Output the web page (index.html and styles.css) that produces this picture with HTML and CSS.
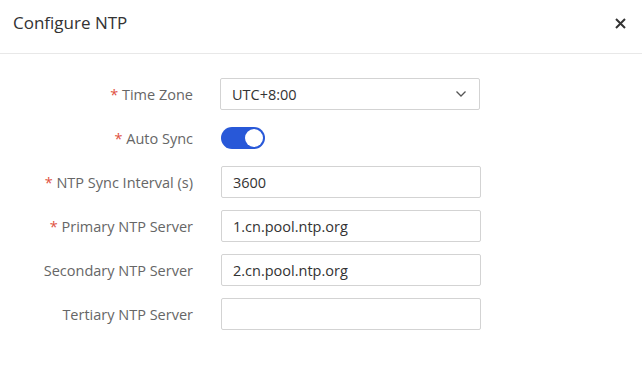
FILE: index.html
```html
<!DOCTYPE html>
<html lang="en">
<head>
    <meta charset="UTF-8">
    <title>Configure NTP</title>
    <link rel="stylesheet" href="styles.css">
</head>
<body>
    <div class="dialog">
        <div class="dialog-header">
            <span class="dialog-title">Configure NTP</span>
            <button class="close-btn" title="Close">
                <svg width="11" height="11" viewBox="0 0 11 11"><path d="M1 1L10 10M10 1L1 10" stroke="#333" stroke-width="2" fill="none"/></svg>
            </button>
        </div>
        <div class="dialog-body">
            <div class="form-row">
                <label class="form-label"><span class="req">*</span> Time Zone</label>
                <div class="form-control select">
                    <span>UTC+8:00</span>
                    <svg width="12" height="8" viewBox="0 0 12 8"><path d="M1.5 1.5L6 6L10.5 1.5" stroke="#555" stroke-width="1.3" fill="none"/></svg>
                </div>
            </div>
            <div class="form-row">
                <label class="form-label"><span class="req">*</span> Auto Sync</label>
                <div class="switch on"><span class="knob"></span></div>
            </div>
            <div class="form-row">
                <label class="form-label"><span class="req">*</span> NTP Sync Interval (s)</label>
                <input class="form-control" type="text" value="3600">
            </div>
            <div class="form-row">
                <label class="form-label"><span class="req">*</span> Primary NTP Server</label>
                <input class="form-control" type="text" value="1.cn.pool.ntp.org">
            </div>
            <div class="form-row">
                <label class="form-label">Secondary NTP Server</label>
                <input class="form-control" type="text" value="2.cn.pool.ntp.org">
            </div>
            <div class="form-row">
                <label class="form-label">Tertiary NTP Server</label>
                <input class="form-control" type="text" value="">
            </div>
        </div>
    </div>
</body>
</html>
```

FILE: styles.css
```css
body {
    margin: 0;
    padding: 0;
    background-color: #fff;
    font-family: 'Open Sans', 'Noto Sans', sans-serif;
    font-size: 14.5px;
    color: #333;
}

.dialog {
    width: 642px;
    height: 369px;
    background-color: #fff;
}

.dialog-header {
    display: flex;
    align-items: center;
    justify-content: space-between;
    height: 44px;
    padding: 0 14px 9px 13px;
    border-bottom: 1px solid #e8e8e8;
}

.dialog-title {
    font-size: 17px;
    color: #333;
}

.close-btn {
    display: flex;
    align-items: center;
    justify-content: center;
    width: 16px;
    height: 16px;
    margin-top: 3px;
    padding: 0;
    border: none;
    background: none;
    cursor: pointer;
}

.dialog-body {
    padding-top: 24px;
}

.form-row {
    display: flex;
    align-items: center;
    height: 32px;
    margin-bottom: 12px;
}

.form-label {
    width: 193px;
    text-align: right;
    color: #666;
    white-space: nowrap;
}

.req {
    color: #e0513f;
}

.form-control {
    box-sizing: border-box;
    width: 260px;
    height: 32px;
    margin-left: 28px;
    padding: 0 11px;
    border: 1px solid #d3d3d3;
    border-radius: 2px;
    font-family: inherit;
    font-size: 14.5px;
    color: #333;
    background-color: #fff;
    outline: none;
}

.select {
    display: flex;
    align-items: center;
    justify-content: space-between;
    margin-left: 27px;
    padding-right: 12px;
}

.switch {
    position: relative;
    width: 44px;
    height: 22px;
    margin-left: 28px;
    border-radius: 11px;
    background-color: #ccc;
}

.switch.on {
    background-color: #2858d8;
}

.knob {
    position: absolute;
    top: 2px;
    right: 2px;
    width: 18px;
    height: 18px;
    border-radius: 50%;
    background-color: #fff;
}
```
